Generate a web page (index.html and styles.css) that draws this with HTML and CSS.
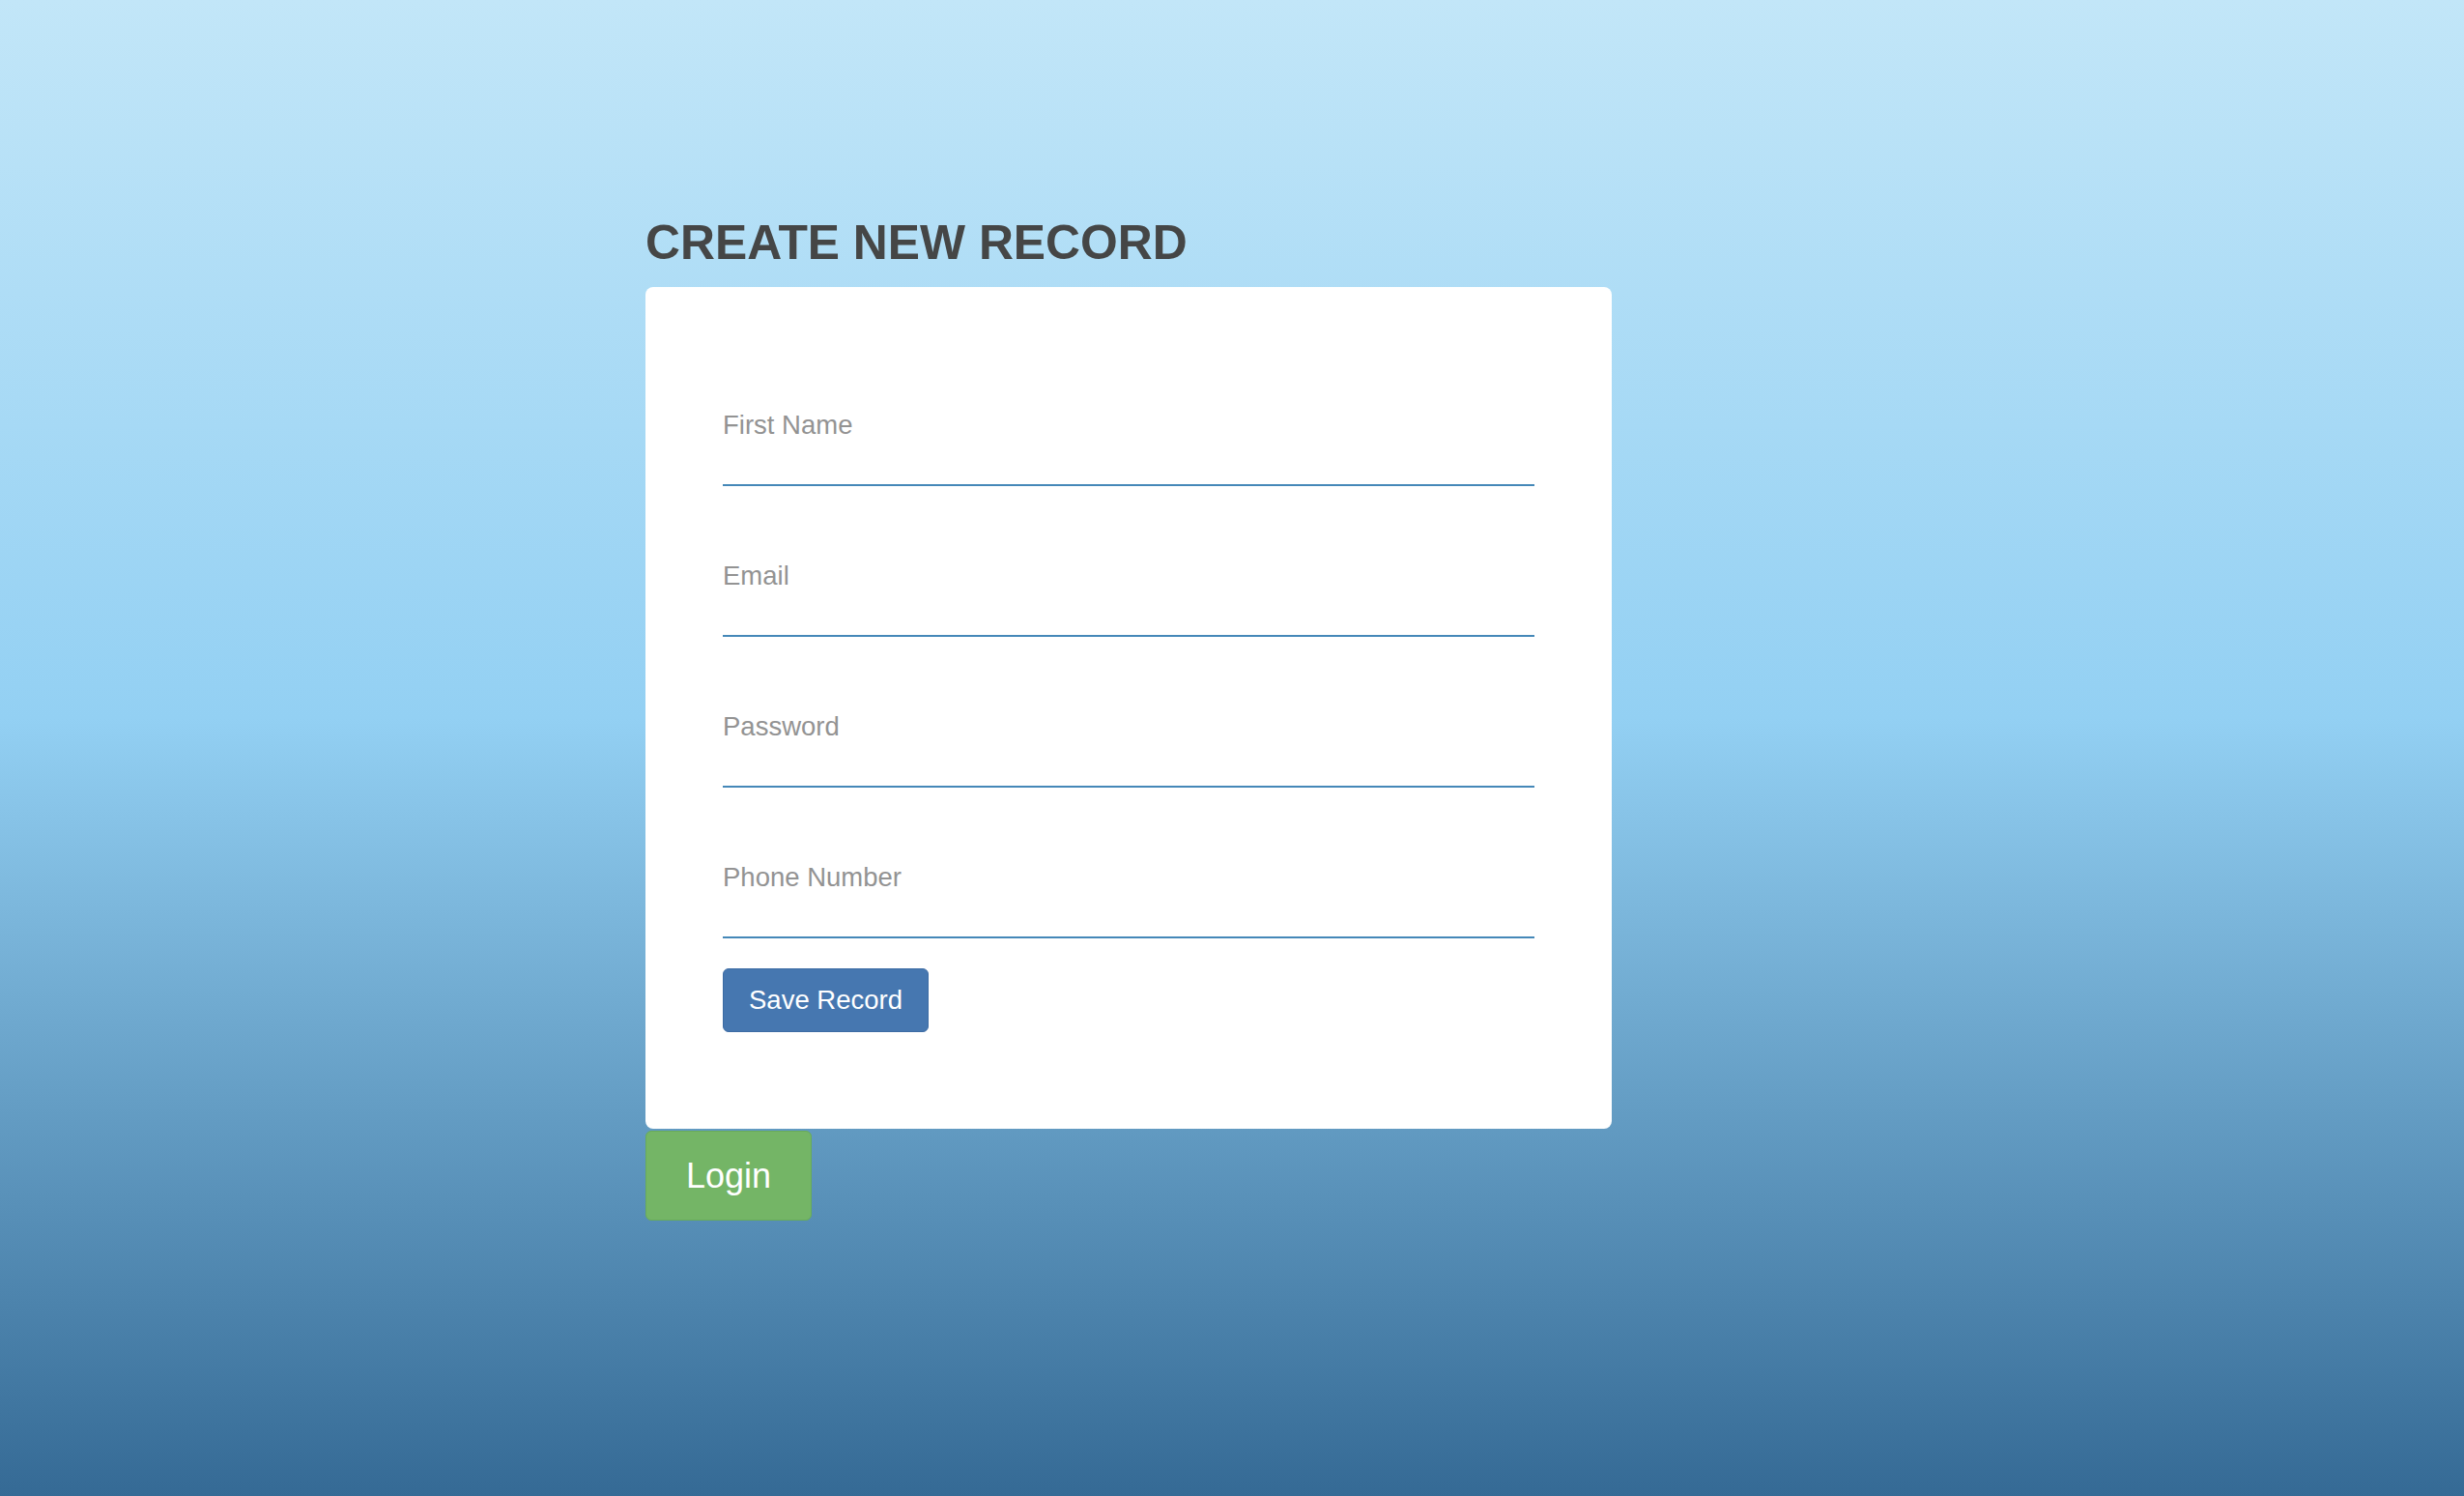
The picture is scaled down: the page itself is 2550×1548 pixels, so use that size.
FILE: index.html
```html
<!DOCTYPE html>
<html lang="en">
<head>
<meta charset="utf-8">
<title>Create New Record</title>
<link rel="stylesheet" href="styles.css">
</head>
<body>
<main class="page">
  <h1 class="title">CREATE NEW RECORD</h1>
  <form class="card">
    <label class="field"><span class="field-label">First Name</span></label>
    <label class="field"><span class="field-label">Email</span></label>
    <label class="field"><span class="field-label">Password</span></label>
    <label class="field"><span class="field-label">Phone Number</span></label>
    <button type="button" class="btn btn-save">Save Record</button>
  </form>
  <button type="button" class="btn btn-login">Login</button>
</main>
</body>
</html>
```

FILE: styles.css
```css
html, body {
  margin: 0;
  padding: 0;
}

body {
  min-height: 100vh;
  background: linear-gradient(to bottom, #c2e6f8 0%, #93d0f3 48%, #356a95 100%);
  font-family: "Liberation Sans", Arial, Helvetica, sans-serif;
}

.page {
  box-sizing: border-box;
  min-height: 100vh;
  padding: 224px 0 0 668px;
  display: flex;
  flex-direction: column;
  align-items: flex-start;
}

.title {
  margin: 0 0 19px 0;
  font-size: 49.8px;
  line-height: 54px;
  font-weight: 700;
  color: #454646;
  letter-spacing: 0;
}

.card {
  box-sizing: border-box;
  width: 1000px;
  height: 871px;
  margin: 0;
  padding: 50px 80px 0 80px;
  background: #ffffff;
  border-radius: 8px;
  display: flex;
  flex-direction: column;
  align-items: flex-start;
}

.field {
  display: block;
  align-self: stretch;
  padding: 77px 0 45px 0;
  border-bottom: 2px solid #4588b8;
}

.field-label {
  display: block;
  font-size: 27.5px;
  line-height: 32px;
  color: #939393;
}

.btn {
  font-family: "Liberation Sans", Arial, Helvetica, sans-serif;
  color: #ffffff;
  cursor: pointer;
  border-radius: 6px;
  margin: 0;
}

.btn-save {
  margin-top: 31px;
  width: 213px;
  height: 66px;
  padding: 0;
  font-size: 27.5px;
  background: #4677b0;
  border: 1px solid #3d6ca4;
}

.btn-login {
  margin-top: 2px;
  width: 172px;
  height: 93px;
  padding: 0;
  font-size: 36px;
  background: #74b566;
  border: 1px solid #68ab5a;
}
```
